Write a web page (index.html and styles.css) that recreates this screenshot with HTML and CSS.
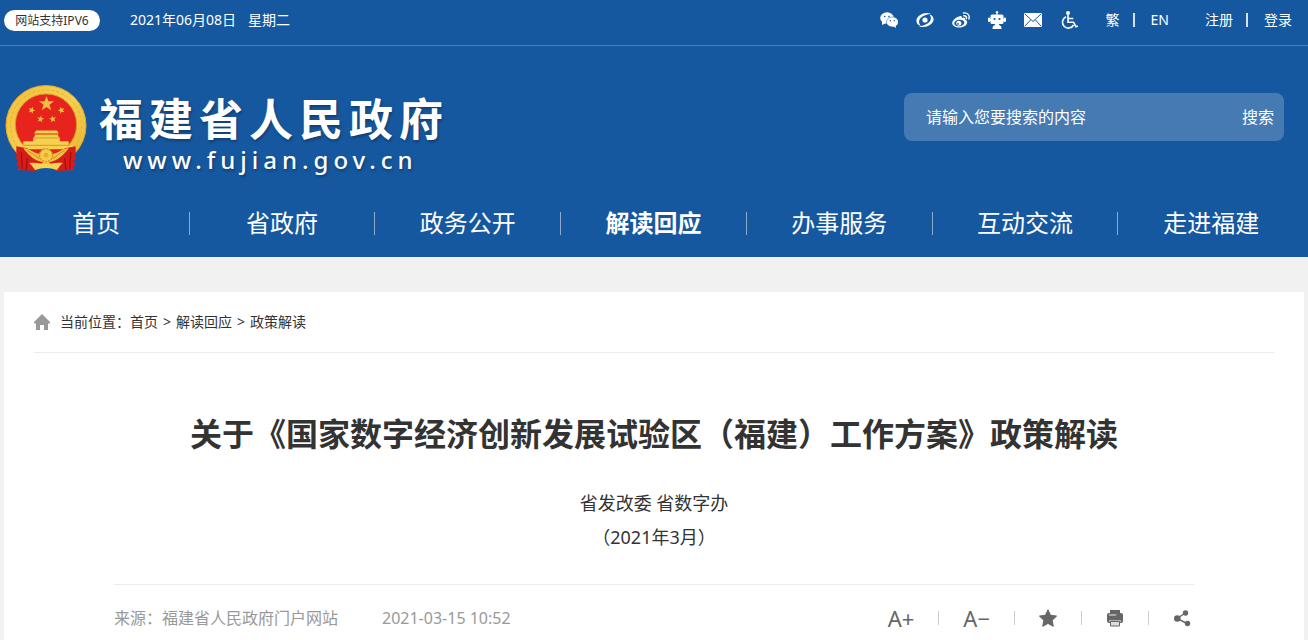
FILE: index.html
```html
<!DOCTYPE html>
<html lang="zh-CN">
<head>
    <meta charset="UTF-8">
    <meta name="viewport" content="width=device-width, initial-scale=1.0">
    <title>福建省人民政府</title>
    <link rel="stylesheet" href="styles.css">
</head>
<body>
    <header class="header">
        <!-- 顶部工具条 -->
        <div class="topbar">
            <div class="wrap topbar-inner">
                <span class="ipv6">网站支持IPV6</span>
                <span class="date">2021年06月08日</span>
                <span class="week">星期二</span>
                <div class="tools">
                    <a href="#" aria-label="微信">
                        <svg viewBox="0 0 18 18"><ellipse cx="7" cy="7" rx="6.8" ry="5.7" fill="#fff"/><path d="M2 10v4l4-2z" fill="#fff"/><ellipse cx="12.4" cy="11" rx="6" ry="5" fill="#fff" stroke="#16589f" stroke-width=".5"/><path d="M13 15l3 2-.4-3z" fill="#fff"/><g fill="#16589f"><circle cx="4.7" cy="5.5" r=".8"/><circle cx="9" cy="5.500" r=".8"/><circle cx="10.400" cy="9.800" r=".7"/><circle cx="14.200" cy="9.800" r=".7"/></g></svg>
                    </a>
                    <a href="#" aria-label="闽政通">
                        <svg viewBox="0 0 18 18"><path d="M15 2.500C8 .4 1 4.500.4 9.200c-.2 3 1.700 5 4.400 5.600C2 11.700 2.600 8 6.500 5.500 9 4 12 3 15 2.500z" fill="#fff"/><path d="M3 15.500c7 2.100 14-2 14.600-6.700.2-3-1.700-5-4.400-5.600 2.800 3.100 2.200 6.800-1.700 9.300-2.500 1.500-5.500 2.500-8.500 3z" fill="#fff"/><circle cx="9" cy="9" r="2.600" fill="#fff"/></svg>
                    </a>
                    <a href="#" aria-label="微博">
                        <svg viewBox="0 0 18 18"><path d="M7.500 5.200c1.500-.5 2.800 0 2.300 1.900 2-.8 4-.4 3.400 1.600 1.300.4 2 1.300 2 2.500 0 2.800-3.600 5.300-7.800 5.300C3.200 16.500.2 14.500.2 12c0-2.700 4-6 7.300-6.800z" fill="#fff"/><ellipse cx="7.300" cy="12" rx="5.100" ry="3.300" fill="#16589f" transform="rotate(-8 7.300 12)"/><circle cx="6.800" cy="12.200" r="2.500" fill="#fff"/><circle cx="6" cy="12.900" r=".9" fill="#16589f"/><path d="M11.500 2c4-.8 6.600 2.500 5.400 6M11.800 4.800c2-.3 3.100 1 2.600 2.800" fill="none" stroke="#fff" stroke-width="1.400" stroke-linecap="round"/></svg>
                    </a>
                    <a href="#" aria-label="智能问答">
                        <svg viewBox="0 0 18 18"><g fill="#fff"><circle cx="9" cy="1.200" r="1.200"/><path d="M8.500 1h1v3h-1z"/><rect x="2.500" y="3.500" width="13" height="9.500" rx="1.500"/><rect x="0" y="6.500" width="2.200" height="4.500" rx="1"/><rect x="15.800" y="6.500" width="2.200" height="4.500" rx="1"/><path d="M1 8h16v2H1zM7 12h4v2H7z"/><path d="M4.500 18c0-3 1-4 3-4h3c2 0 3 1 3 4z"/></g><circle cx="6.500" cy="8" r="1.100" fill="#16589f"/><circle cx="11.500" cy="8" r="1.100" fill="#16589f"/></svg>
                    </a>
                    <a href="#" aria-label="邮箱">
                        <svg viewBox="0 0 18 18"><rect x="0" y="2" width="18" height="14" rx="1.200" fill="#fff"/><path d="M1 3l8 7.500L17 3M1 15l5.800-6.300M17 15l-5.800-6.300" fill="none" stroke="#16589f" stroke-width="1"/></svg>
                    </a>
                    <a href="#" aria-label="无障碍">
                        <svg viewBox="0 0 18 18"><circle cx="8" cy="2" r="2" fill="#fff"/><path d="M8 4v7.200h5.500l2.500 4.500 1.800-.8M8.300 7.500h5M6 5.800a5.900 5.900 0 1 0 7.600 8.200" fill="none" stroke="#fff" stroke-width="1.600"/></svg>
                    </a>
                </div>
                <div class="links">
                    <a href="#">繁</a>
                    <i></i>
                    <a href="#">EN</a>
                </div>
                <div class="links login">
                    <a href="#">注册</a>
                    <i></i>
                    <a href="#">登录</a>
                </div>
            </div>
        </div>

        <!-- logo和搜索 -->
        <div class="wrap brand">
            <a class="logo" href="#">
                <svg class="emblem" viewBox="0 0 82 89" aria-hidden="true">
                    <defs>
                        <linearGradient id="gold" x1="0" y1="0" x2="1" y2="1">
                            <stop offset="0" stop-color="#f0bf3c"/>
                            <stop offset=".5" stop-color="#f6d050"/>
                            <stop offset="1" stop-color="#e9b32b"/>
                        </linearGradient>
                        <path id="star" d="M0-1L.24-.32.95-.31.38.12.59.81 0 .4-.59.81-.38.12-.95-.31-.24-.32z"/>
                    </defs>
                    <circle cx="41" cy="41" r="40.500" fill="url(#gold)" stroke="#e0a52b"/>
                    <circle cx="41" cy="41" r="36" fill="none" stroke="#e5b036" stroke-width="1" stroke-dasharray="3 2"/>
                    <circle cx="41" cy="40" r="31" fill="#e6231d" stroke="#d9982a"/>
                    <g fill="#f0c040">
                        <use href="#star" transform="translate(41.500 19) scale(8)"/>
                        <use href="#star" transform="translate(26.500 25.500) scale(3.800) rotate(20)"/>
                        <use href="#star" transform="translate(56.500 25.500) scale(3.800) rotate(-20)"/>
                        <use href="#star" transform="translate(35.500 34.500) scale(3.800) rotate(10)"/>
                        <use href="#star" transform="translate(47.800 34.500) scale(3.800) rotate(-10)"/>
                    </g>
                    <path d="M31 46h21l2 3H29zM30 50h23l1 3H29zM28 53h27v4h9v4h4v4H14v-4h4v-4h10z" fill="#f8d050"/>
                    <path d="M29 49.500h25M29 53.500h25M18 61h47" stroke="#d18c20" stroke-width=".8"/>
                    <!-- 红绸 -->
                    <path d="M11 62l11 2 16 14-8 9-18-1 2-3-3-2 2-4-2-2zM71 62l-11 2-16 14 8 9 18-1-2-3 3-2-2-4 2-2z" fill="#d81c18"/>
                    <path d="M16 68l1 17M22 74l-1 12M66 68l-1 17M60 74l1 12" stroke="#a90f12" stroke-width="1.400"/>
                    <path d="M18 64c8 0 12 7 19 7h8c7 0 11-7 19-7-4 5-9 11-16 13l-7 2-7-2c-7-2-12-8-16-13z" fill="#f0c342"/>
                    <path d="M22 66c6 3 9 8 15 9M60 66c-6 3-9 8-15 9" fill="none" stroke="#d18c20" stroke-width="1"/>
                    <circle cx="41" cy="71" r="6.500" fill="#f6cd4a" stroke="#d69a25" stroke-width="1.500" stroke-dasharray="2 1"/>
                    <circle cx="41" cy="71" r="2.500" fill="#e9ae2c"/>
                    <path d="M24 79c8-1 12 1 17 1s9-2 17-1c-3 2-4 5-6 7-4-1-7-2-11-2s-7 1-11 2c-2-2-3-5-6-7z" fill="#f7d354"/>
                </svg>
                <span class="logo-text">
                    <strong>福建省人民政府</strong>
                    <em>www.fujian.gov.cn</em>
                </span>
            </a>
            <form class="search">
                <input type="text" placeholder="请输入您要搜索的内容" aria-label="搜索内容">
                <button type="button">搜索</button>
            </form>
        </div>

        <!-- 导航 -->
        <nav class="wrap">
            <ul class="nav">
                <li><a href="#">首页</a></li>
                <li><a href="#">省政府</a></li>
                <li><a href="#">政务公开</a></li>
                <li class="active"><a href="#">解读回应</a></li>
                <li><a href="#">办事服务</a></li>
                <li><a href="#">互动交流</a></li>
                <li><a href="#">走进福建</a></li>
            </ul>
        </nav>
    </header>

    <main class="wrap main">
        <!-- 当前位置 -->
        <div class="crumb">
            <svg viewBox="0 0 16 16" aria-hidden="true"><path d="M8 0l8 8v1.500h-2V16h-4v-5H6v5H2V9.500H0V8z" fill="#999"/></svg>
            <span>当前位置：</span>
            <a href="#">首页</a>
            <b>&gt;</b>
            <a href="#">解读回应</a>
            <b>&gt;</b>
            <a href="#">政策解读</a>
        </div>

        <article class="article">
            <h1>关于《国家数字经济创新发展试验区（福建）工作方案》政策解读</h1>
            <p class="sub">省发改委 省数字办</p>
            <p class="sub">（2021年3月）</p>
            <div class="meta">
                <span class="source">来源：福建省人民政府门户网站</span>
                <span>2021-03-15 10:52</span>
                <div class="actions">
                    <button type="button" aria-label="放大字体">A+</button>
                    <i></i>
                    <button type="button" aria-label="缩小字体">A−</button>
                    <i></i>
                    <button type="button" aria-label="收藏">
                        <svg viewBox="0 0 18 18"><path d="M9 .8l2.600 5.500 6 .8-4.400 4.200 1.100 6L9 14.400l-5.300 2.900 1.100-6L.4 7.100l6-.8z" fill="#666" stroke="#666" stroke-linejoin="round"/></svg>
                    </button>
                    <i></i>
                    <button type="button" aria-label="打印">
                        <svg viewBox="0 0 18 18"><path d="M4 1h10v3H4z" fill="#666"/><rect x="1" y="4" width="16" height="10" rx="2" fill="#666"/><path d="M3 5h8l-1.500 2H3z" fill="#aaa"/><path d="M3 11.500h12v1H3z" fill="#fff"/><path d="M4.500 12.500h9V17h-9z" fill="#ddd" stroke="#666"/></svg>
                    </button>
                    <i></i>
                    <button type="button" aria-label="分享">
                        <svg viewBox="0 0 18 18"><path d="M12.500 4L4 9.500l10 5" fill="none" stroke="#666" stroke-width="1.400"/><g fill="#666"><circle cx="12.500" cy="4" r="2.700"/><circle cx="4.300" cy="9.500" r="3.300"/><circle cx="14.500" cy="14.500" r="2.700"/></g></svg>
                    </button>
                </div>
            </div>
        </article>
    </main>
</body>
</html>
```

FILE: styles.css
```css
*{
    margin: 0;
    padding: 0;
    list-style: none;
    box-sizing: border-box;
}

body{
    min-height: 100vh;
    display: flex;
    flex-direction: column;
    background-color: #f1f1f1;
    color: #333;
    font: 14px/20px "Noto Sans", "Noto Sans CJK SC", sans-serif;
}

a{
    color: inherit;
    text-decoration: none;
}

button, input{
    border: 0;
    background: none;
    color: inherit;
    font: inherit;
}

button{
    cursor: pointer;
}

svg{
    display: block;
}

.wrap{
    width: 100%;
    max-width: 1300px;
    margin: 0 auto;
}

/* 头部 */
.header{
    background-color: #16589f;
    color: #fff;
}

.topbar{
    border-bottom: 1px solid #4a80ba;
}

.topbar-inner{
    display: flex;
    align-items: center;
    padding: 0 12px 5px 0;
    height: 45px;
}

.ipv6{
    width: 96px;
    border-radius: 11px;
    background-color: #fff;
    color: #333;
    font-size: 12px;
    line-height: 21px;
    text-align: center;
}

.date{
    margin-left: 30px;
}

.week{
    margin-left: 12px;
}

.tools{
    display: flex;
    gap: 18px;
    margin-left: auto;
}

.tools svg{
    width: 18px;
    height: 18px;
}

.links{
    display: flex;
    align-items: center;
    margin-left: 28px;
}

.login{
    margin-left: 36px;
}

.links i{
    width: 2px;
    height: 14px;
    margin: 0 16px 0 13px;
    background-color: #d5e1ee;
}

/* logo和搜索 */
.brand{
    display: flex;
    justify-content: space-between;
    align-items: flex-start;
    padding: 39px 20px 16px 1px;
}

.logo{
    display: flex;
    gap: 12px;
}

.emblem{
    width: 82px;
    height: 88px;
}

.logo-text{
    display: flex;
    flex-direction: column;
    padding-top: 11px;
    text-shadow: 1px 2px 3px rgba(0, 0, 0, .3);
}

.logo-text strong{
    font-family: "Liberation Sans", "Noto Sans CJK SC", sans-serif;
    font-size: 44px;
    line-height: 50px;
    letter-spacing: 6px;
}

.logo-text em{
    padding-left: 24px;
    font-size: 24px;
    font-style: normal;
    font-weight: 500;
    line-height: 27px;
    letter-spacing: 5px;
}

.search{
    display: flex;
    width: 380px;
    height: 48px;
    margin-top: 8px;
    border-radius: 8px;
    background-color: #467ab3;
    font-size: 16px;
}

.search input{
    flex: 1;
    min-width: 0;
    padding-left: 22px;
    outline: none;
}

.search input::placeholder{
    color: #fff;
    opacity: 1;
}

.search button{
    padding: 0 10px;
}

/* 导航 */
.nav{
    display: flex;
}

.nav li{
    flex: 1;
    display: flex;
    align-items: center;
    font-size: 24px;
    line-height: 68px;
    text-align: center;
}

.nav a{
    flex: 1;
}

.nav li:not(:last-child)::after{
    content: "";
    width: 1px;
    height: 23px;
    background-color: #8aabcf;
}

.nav .active{
    font-weight: bold;
}

/* 正文 */
.main{
    flex: 1;
    margin-top: 35px;
    padding: 0 30px;
    background-color: #fff;
}

.crumb{
    display: flex;
    align-items: center;
    height: 61px;
    border-bottom: 1px solid #ececec;
}

.crumb svg{
    width: 16px;
    height: 16px;
    margin-right: 10px;
}

.crumb b{
    margin: 0 5px;
    font-weight: normal;
}

.article{
    padding: 57px 80px 0;
}

.article h1{
    margin-bottom: 28px;
    font-size: 32px;
    line-height: 48px;
    text-align: center;
}

.sub{
    font-size: 18px;
    line-height: 34px;
    text-align: center;
}

.meta{
    display: flex;
    margin-top: 30px;
    padding: 15px 3px 0 0;
    border-top: 1px solid #ececec;
    color: #999;
    font-size: 16px;
    line-height: 36px;
}

.source{
    margin-right: 44px;
}

.actions{
    display: flex;
    align-items: center;
    gap: 24px;
    margin-left: auto;
    color: #666;
    font-size: 22px;
}

.actions i{
    width: 1px;
    height: 14px;
    background-color: #ccc;
}

.actions svg{
    width: 18px;
    height: 18px;
}
```
